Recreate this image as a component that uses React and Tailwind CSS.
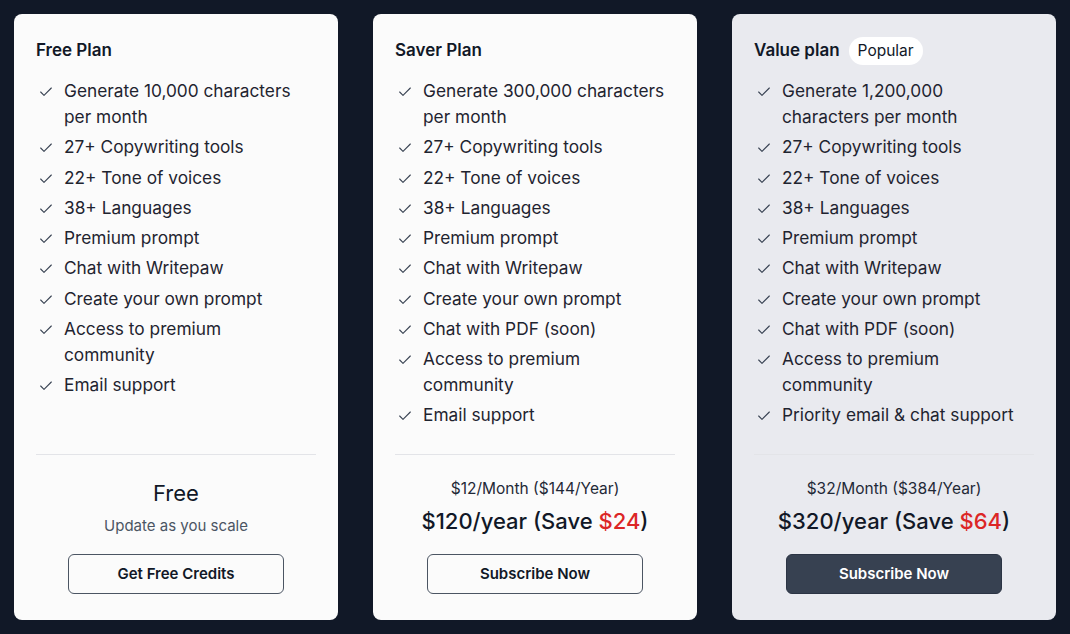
import { Check } from "lucide-react";

const plans = [
  {
    name: "Free Plan",
    features: [
      "Generate 10,000 characters per month",
      "27+ Copywriting tools",
      "22+ Tone of voices",
      "38+ Languages",
      "Premium prompt",
      "Chat with Writepaw",
      "Create your own prompt",
      "Access to premium community",
      "Email support",
    ],
    free: true,
    button: "Get Free Credits",
  },
  {
    name: "Saver Plan",
    features: [
      "Generate 300,000 characters per month",
      "27+ Copywriting tools",
      "22+ Tone of voices",
      "38+ Languages",
      "Premium prompt",
      "Chat with Writepaw",
      "Create your own prompt",
      "Chat with PDF (soon)",
      "Access to premium community",
      "Email support",
    ],
    monthly: "$12/Month ($144/Year)",
    yearly: "$120/year",
    save: "$24",
    button: "Subscribe Now",
  },
  {
    name: "Value plan",
    popular: true,
    features: [
      "Generate 1,200,000 characters per month",
      "27+ Copywriting tools",
      "22+ Tone of voices",
      "38+ Languages",
      "Premium prompt",
      "Chat with Writepaw",
      "Create your own prompt",
      "Chat with PDF (soon)",
      "Access to premium community",
      "Priority email & chat support",
    ],
    monthly: "$32/Month ($384/Year)",
    yearly: "$320/year",
    save: "$64",
    button: "Subscribe Now",
  },
];

const PlanCard = ({ plan }) => {
  return (
    <div
      className={`flex flex-col rounded-lg px-[22px] pt-[25px] pb-[26px] ${
        plan.popular ? "bg-[#e9eaef]" : "bg-[#fbfbfb]"
      }`}
    >
      {/* Titel */}
      <div className="flex items-center gap-[9px] h-6">
        <h2 className="text-[17px] font-semibold text-[#111827]">{plan.name}</h2>
        {plan.popular && (
          <span className="bg-white rounded-full px-[9px] py-[2px] text-[15.5px] text-[#111827]">
            Popular
          </span>
        )}
      </div>

      {/* Features */}
      <ul className="mt-[15px] flex flex-col gap-[4.25px]">
        {plan.features.map((f) => (
          <li key={f} className="flex items-start gap-[10px] text-[17.3px] leading-[26px] text-[#1f2430]">
            <Check size={16} strokeWidth={1.6} className="mt-[6px] ml-[2px] shrink-0 text-[#374151]" />
            <span>{f}</span>
          </li>
        ))}
      </ul>

      {/* Preis */}
      <div className="mt-auto border-t border-[#e3e4e8] pt-6 flex flex-col items-center">
        {plan.free ? (
          <>
            <p className="text-[22px] leading-[28px] text-[#111827]">Free</p>
            <p className="mt-[9px] text-[15px] leading-5 text-[#4b5563]">Update as you scale</p>
          </>
        ) : (
          <>
            <p className="text-[15.5px] leading-5 text-[#1f2937]">{plan.monthly}</p>
            <p className="mt-[7px] text-[22px] leading-[30px] font-medium text-[#111827]">
              {plan.yearly} (Save <span className="text-[#dc2626]">{plan.save}</span>)
            </p>
          </>
        )}
        <button
          className={`mt-[18px] w-[216px] h-10 rounded-md text-[15px] font-semibold border ${
            plan.popular
              ? "bg-[#374151] text-white border-[#2b3444]"
              : "bg-transparent text-[#111827] border-[#4b5563]"
          }`}
        >
          {plan.button}
        </button>
      </div>
    </div>
  );
};

export default function App() {
  return (
    <div
      className="h-[634px] bg-[#111827] p-[14px] grid grid-cols-3 gap-[35px]"
      style={{ fontFamily: "Inter, 'Noto Sans', sans-serif" }}
    >
      {plans.map((p) => (
        <PlanCard key={p.name} plan={p} />
      ))}
    </div>
  );
}
